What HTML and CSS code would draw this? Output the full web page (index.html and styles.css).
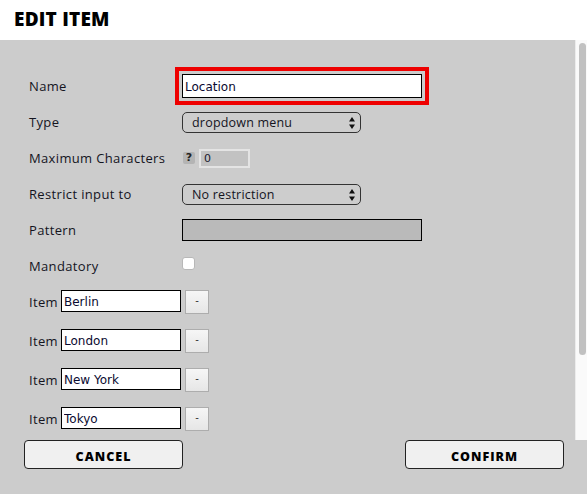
FILE: index.html
```html
<!DOCTYPE html>
<html lang="en">
<head>
<meta charset="utf-8">
<title>Edit item</title>
<link rel="stylesheet" href="styles.css">
</head>
<body>
<div class="dialog">
  <header class="header"><h1 class="title">EDIT ITEM</h1></header>
  <div class="main">
    <div class="scroll">
      <form class="form">
        <div class="row">
          <label class="label">Name</label>
          <input class="text name-input" type="text" value="Location">
        </div>
        <div class="row">
          <label class="label">Type</label>
          <div class="select"><span>dropdown menu</span>
            <svg class="arrows" width="6" height="12" viewBox="0 0 6 12"><path d="M3 0 L6 4.5 L0 4.5 Z M0 7.5 L6 7.5 L3 12 Z" fill="#111"/></svg>
          </div>
        </div>
        <div class="row">
          <label class="label">Maximum Characters</label>
          <div class="maxchars">
            <span class="help">?</span>
            <input class="small-input" type="text" value="0">
          </div>
        </div>
        <div class="row">
          <label class="label">Restrict input to</label>
          <div class="select"><span>No restriction</span>
            <svg class="arrows" width="6" height="12" viewBox="0 0 6 12"><path d="M3 0 L6 4.5 L0 4.5 Z M0 7.5 L6 7.5 L3 12 Z" fill="#111"/></svg>
          </div>
        </div>
        <div class="row">
          <label class="label">Pattern</label>
          <input class="text pattern-input" type="text" value="">
        </div>
        <div class="row">
          <label class="label">Mandatory</label>
          <span class="checkbox"></span>
        </div>
        <div class="items">
          <div class="item-row">
            <label class="item-label">Item</label>
            <input class="item-input" type="text" value="Berlin">
            <button type="button" class="remove">-</button>
          </div>
          <div class="item-row">
            <label class="item-label">Item</label>
            <input class="item-input" type="text" value="London">
            <button type="button" class="remove">-</button>
          </div>
          <div class="item-row">
            <label class="item-label">Item</label>
            <input class="item-input" type="text" value="New York">
            <button type="button" class="remove">-</button>
          </div>
          <div class="item-row">
            <label class="item-label">Item</label>
            <input class="item-input" type="text" value="Tokyo">
            <button type="button" class="remove">-</button>
          </div>
        </div>
      </form>
    </div>
    <div class="scrollbar"><div class="thumb"></div></div>
  </div>
  <footer class="footer">
    <button type="button" class="action">CANCEL</button>
    <button type="button" class="action">CONFIRM</button>
  </footer>
</div>
</body>
</html>
```
FILE: styles.css
```css
html, body {
  margin: 0;
  padding: 0;
}
body {
  width: 587px;
  height: 494px;
  overflow: hidden;
  font-family: "Open Sans", "DejaVu Sans", sans-serif;
  color: #14141e;
  background: #cccccc;
}
.dialog {
  display: flex;
  flex-direction: column;
  height: 494px;
}
.header {
  height: 40px;
  flex: none;
  background: #ffffff;
  display: flex;
  align-items: center;
  padding-left: 14px;
  box-sizing: border-box;
}
.title {
  margin: 0;
  font-family: "Open Sans", sans-serif;
  font-weight: 800;
  font-size: 19px;
  letter-spacing: 0.2px;
  color: #000;
  line-height: 1;
  padding-bottom: 1px;
}
.main {
  height: 400px;
  flex: none;
  display: flex;
}
.scroll {
  flex: 1;
  overflow: hidden;
  background: #cccccc;
}
.scrollbar {
  width: 12px;
  flex: none;
  box-sizing: border-box;
  background: #fafafa;
  border-left: 1px solid #ececec;
  padding: 3px 1px 0 3px;
}
.thumb {
  height: 312px;
  background: #c1c1c1;
  border-radius: 4px;
}
.form {
  padding: 28px 0 0 29px;
  margin: 0;
}
.row {
  height: 36px;
  display: flex;
  align-items: center;
}
.label {
  width: 153px;
  flex: none;
  font-size: 13px;
  letter-spacing: 0.35px;
}
.text {
  box-sizing: border-box;
  width: 240px;
  border: 1px solid #000;
  margin: 0;
  padding: 0 2px;
  font-family: "DejaVu Sans", sans-serif;
  font-size: 12px;
  color: #0a0a30;
}
.name-input {
  height: 24px;
  padding-top: 2px;
  background: #ffffff;
  outline: 4px solid #ee0000;
  outline-offset: 3px;
}
.pattern-input {
  height: 22px;
  background: #bababa;
}
.select {
  box-sizing: border-box;
  width: 179px;
  height: 21px;
  border: 1px solid #333;
  border-radius: 5px;
  background: #cdcdcd;
  display: flex;
  align-items: center;
  justify-content: space-between;
  padding: 1px 5px 0 9px;
  font-size: 12.5px;
  letter-spacing: 0.2px;
}
.arrows {
  display: block;
}
.maxchars {
  display: flex;
  align-items: center;
  gap: 4px;
  margin-left: 1px;
}
.help {
  width: 12px;
  height: 12px;
  background: #b4b4b4;
  border-radius: 2px;
  font-family: "DejaVu Sans", sans-serif;
  font-weight: bold;
  font-size: 11px;
  line-height: 12px;
  text-align: center;
  color: #222;
}
.small-input {
  box-sizing: border-box;
  width: 51px;
  height: 19px;
  border: 2px solid #e4e4e4;
  background: #c2c2c2;
  margin: 0;
  padding: 0 3px;
  font-family: "DejaVu Sans", sans-serif;
  font-size: 11px;
  color: #1a1a30;
}
.checkbox {
  box-sizing: border-box;
  width: 13px;
  height: 13px;
  background: #fff;
  border: 1px solid #b8b8b8;
  border-radius: 3px;
  margin-top: -6px;
}
.items {
  margin-top: 5px;
  display: flex;
  flex-direction: column;
  gap: 15px;
}
.item-row {
  height: 24px;
  display: flex;
  align-items: center;
  gap: 4px;
}
.item-label {
  width: 28px;
  font-size: 13px;
  letter-spacing: 0.35px;
  padding-top: 2px;
}
.item-input {
  box-sizing: border-box;
  width: 120px;
  height: 22px;
  border: 1px solid #000;
  background: #fff;
  margin: 0;
  padding: 2px 2px 0;
  font-family: "DejaVu Sans", sans-serif;
  font-size: 12px;
  color: #0a0a30;
}
.remove {
  box-sizing: border-box;
  width: 24px;
  height: 24px;
  margin: 1px 0 0;
  padding: 0 0 2px;
  border: 1px solid #adadad;
  background: linear-gradient(#f6f6f6, #e6e6e6);
  font-family: "DejaVu Sans", sans-serif;
  font-size: 10px;
  color: #333;
}
.footer {
  flex: 1;
  display: flex;
  justify-content: space-between;
  align-items: flex-start;
  padding: 0 23px 0 24px;
}
.action {
  box-sizing: border-box;
  width: 159px;
  height: 29px;
  margin: 0;
  padding: 3px 0 0;
  border: 1px solid #222;
  border-radius: 4px;
  background: #f0f0f0;
  font-family: "Open Sans", sans-serif;
  font-weight: 800;
  font-size: 12.5px;
  letter-spacing: 1px;
  color: #000;
}
```
